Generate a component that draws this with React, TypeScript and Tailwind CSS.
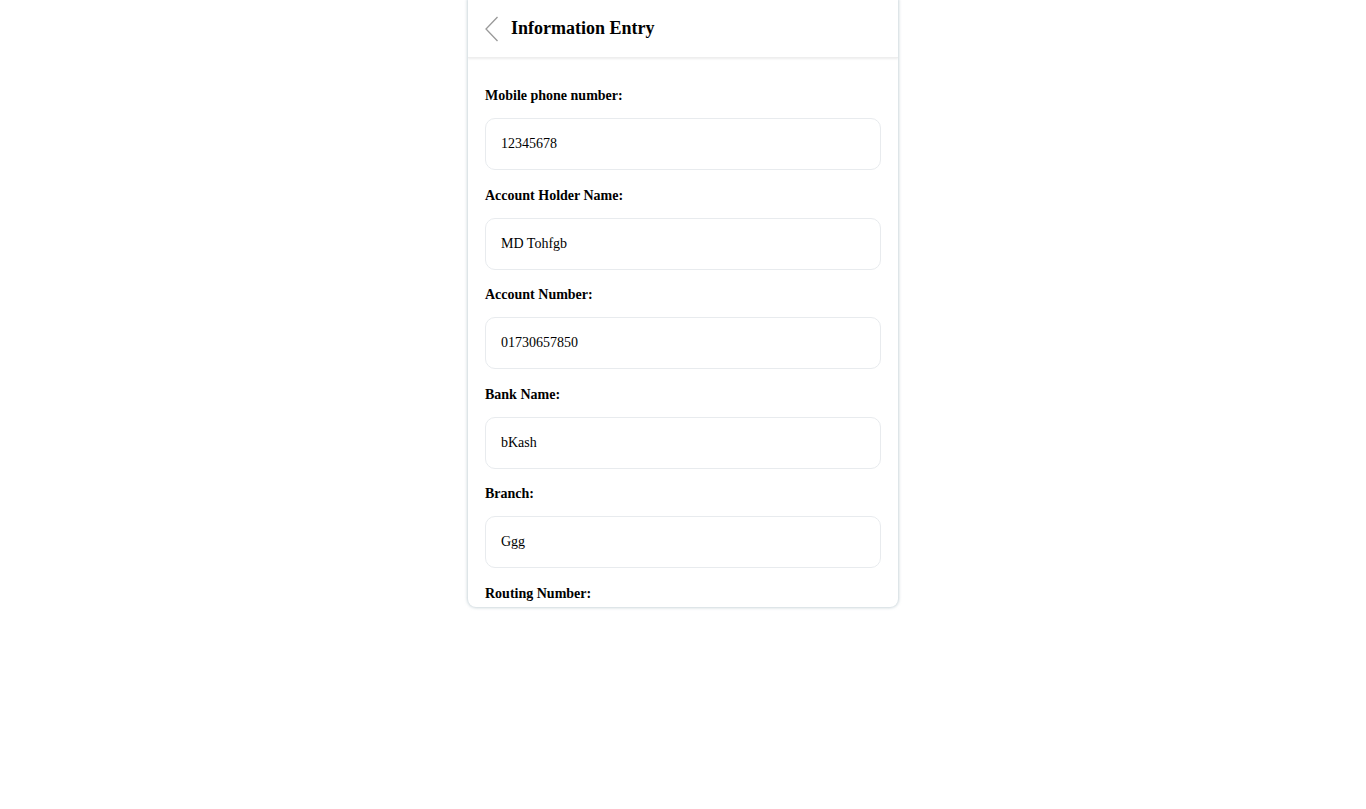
import { useState } from 'react'

interface Field {
  key: string
  label: string
  value: string
}

const initialFields: Field[] = [
  { key: 'mobile', label: 'Mobile phone number:', value: '12345678' },
  { key: 'holder', label: 'Account Holder Name:', value: 'MD Tohfgb' },
  { key: 'account', label: 'Account Number:', value: '01730657850' },
  { key: 'bank', label: 'Bank Name:', value: 'bKash' },
  { key: 'branch', label: 'Branch:', value: 'Ggg' },
  { key: 'routing', label: 'Routing Number:', value: '' },
]

export default function App() {
  const [fields, setFields] = useState<Field[]>(initialFields)

  function update(key: string, value: string) {
    setFields(list => list.map(f => (f.key === key ? { ...f, value } : f)))
  }

  return (
    <div className="min-h-[809px] bg-white" style={{ fontFamily: '"Liberation Serif", "Times New Roman", serif' }}>
      <div className="mx-auto w-[430px] h-[607px] overflow-hidden bg-white rounded-b-lg shadow-[0_0_3px_1px_rgba(160,180,190,0.55)]">
        <div className="h-[58px] flex items-center px-[17px] shadow-[0_1px_2px_rgba(0,0,0,0.08)] border-b border-[#eeeeee]">
          <button className="w-[16px] h-[28px] flex items-center justify-start text-[#999999]">
            <svg width="14" height="26" viewBox="0 0 14 26" fill="none">
              <path d="M12.5 1 L1 13 L12.5 25" stroke="currentColor" strokeWidth="1.3" />
            </svg>
          </button>
          <h1 className="ml-[10px] text-[18px] font-bold text-black">Information Entry</h1>
        </div>

        <div className="px-[17px] pt-[27px]">
          {fields.map(f => (
            <div key={f.key} className="mb-[14.5px]">
              <label className="block text-[14px] font-bold leading-[22px] text-black mb-[11px]">{f.label}</label>
              <input
                value={f.value}
                onChange={e => update(f.key, e.target.value)}
                className="w-full h-[52px] rounded-[10px] border border-[#e8ebee] px-[15px] text-[14px] text-black outline-none"
              />
            </div>
          ))}
        </div>
      </div>
    </div>
  )
}
